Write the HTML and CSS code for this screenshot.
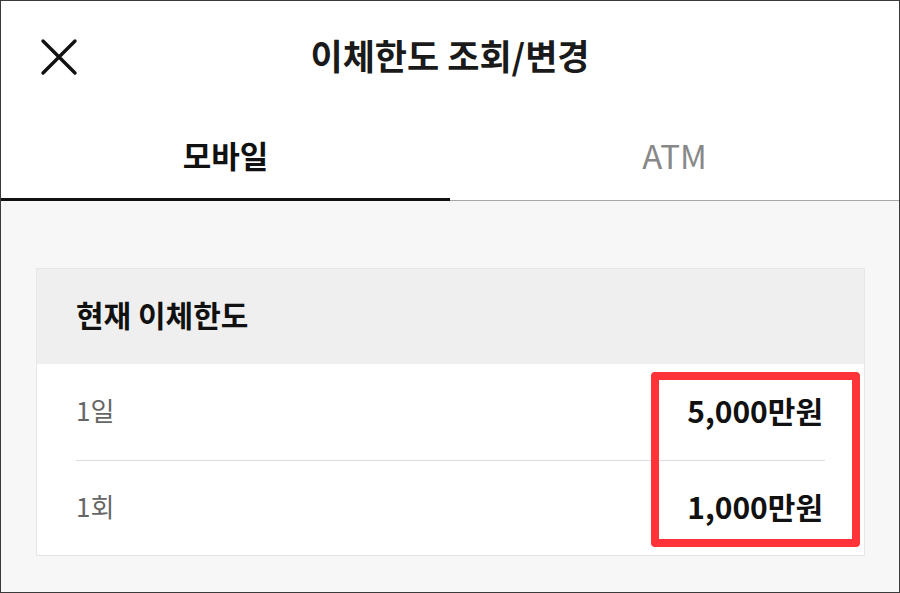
FILE: index.html
```html
<!DOCTYPE html>
<html>
<head>
    <title>이체한도 조회/변경</title>
    <link rel="stylesheet" href="styles.css">
</head>
<body>
    <div class="screen">
        <header class="topbar">
            <button class="close" type="button" aria-label="닫기">
                <svg width="38" height="38" viewBox="0 0 38 38">
                    <path d="M3 3 L35 35 M35 3 L3 35" stroke="#111" stroke-width="3.4" stroke-linecap="round" fill="none"/>
                </svg>
            </button>
            <h1>이체한도 조회/변경</h1>
        </header>

        <nav class="tabs">
            <div class="tab active">모바일</div>
            <div class="tab">ATM</div>
        </nav>

        <main class="content">
            <section class="card">
                <div class="card-head">현재 이체한도</div>
                <div class="rows">
                    <div class="row">
                        <span class="label">1일</span>
                        <span class="value">5,000만원</span>
                    </div>
                    <div class="row">
                        <span class="label">1회</span>
                        <span class="value">1,000만원</span>
                    </div>
                </div>
                <!-- 강조 표시 -->
                <div class="highlight"></div>
            </section>
        </main>
    </div>
</body>
</html>
```

FILE: styles.css
```css
body {
    margin: 0;
    font-family: "Noto Sans CJK KR", "Noto Sans", sans-serif;
}
.screen {
    width: 900px;
    height: 593px;
    box-sizing: border-box;
    border: 1px solid #3a3a3a;
    background-color: #f7f7f7;
    overflow: hidden;
}
.topbar {
    position: relative;
    height: 113px;
    box-sizing: border-box;
    padding-bottom: 6px;
    background-color: #fff;
    display: flex;
    align-items: center;
    justify-content: center;
}
.topbar h1 {
    margin: 0;
    font-size: 35px;
    font-weight: bold;
    color: #1a1a1a;
}
.close {
    position: absolute;
    left: 39px;
    top: 37px;
    padding: 0;
    border: none;
    background: none;
}
.close svg {
    display: block;
}
.tabs {
    display: flex;
    background-color: #fff;
}
.tab {
    flex: 1;
    height: 87px;
    box-sizing: border-box;
    display: flex;
    align-items: center;
    justify-content: center;
    padding-bottom: 5px;
    font-size: 33px;
    color: #888;
    border-bottom: 1px solid #a8a8a8;
}
.tab.active {
    color: #111;
    font-size: 31px;
    font-weight: bold;
    border-bottom: 3px solid #111;
    padding-bottom: 3px;
}
.content {
    padding: 67px 34px 0 35px;
}
.card {
    position: relative;
    border: 1px solid #e6e6e6;
    background-color: #fff;
}
.card-head {
    height: 95px;
    box-sizing: border-box;
    display: flex;
    align-items: center;
    padding: 0 0 6px 39px;
    background-color: #efefef;
    font-size: 30px;
    font-weight: bold;
    color: #111;
}
.rows {
    padding: 0 39px;
}
.row {
    height: 96px;
    box-sizing: border-box;
    padding: 0 2px 5px 0;
    display: flex;
    align-items: center;
    justify-content: space-between;
}
.row + .row {
    border-top: 1px solid #dcdcdc;
    height: 95px;
}
.label {
    font-size: 26px;
    color: #666;
}
.value {
    font-size: 30px;
    font-weight: bold;
    color: #111;
}
.highlight {
    position: absolute;
    left: 614px;
    top: 103px;
    width: 209px;
    height: 175px;
    box-sizing: border-box;
    border: 8px solid #ff3338;
    border-radius: 4px;
}
```
